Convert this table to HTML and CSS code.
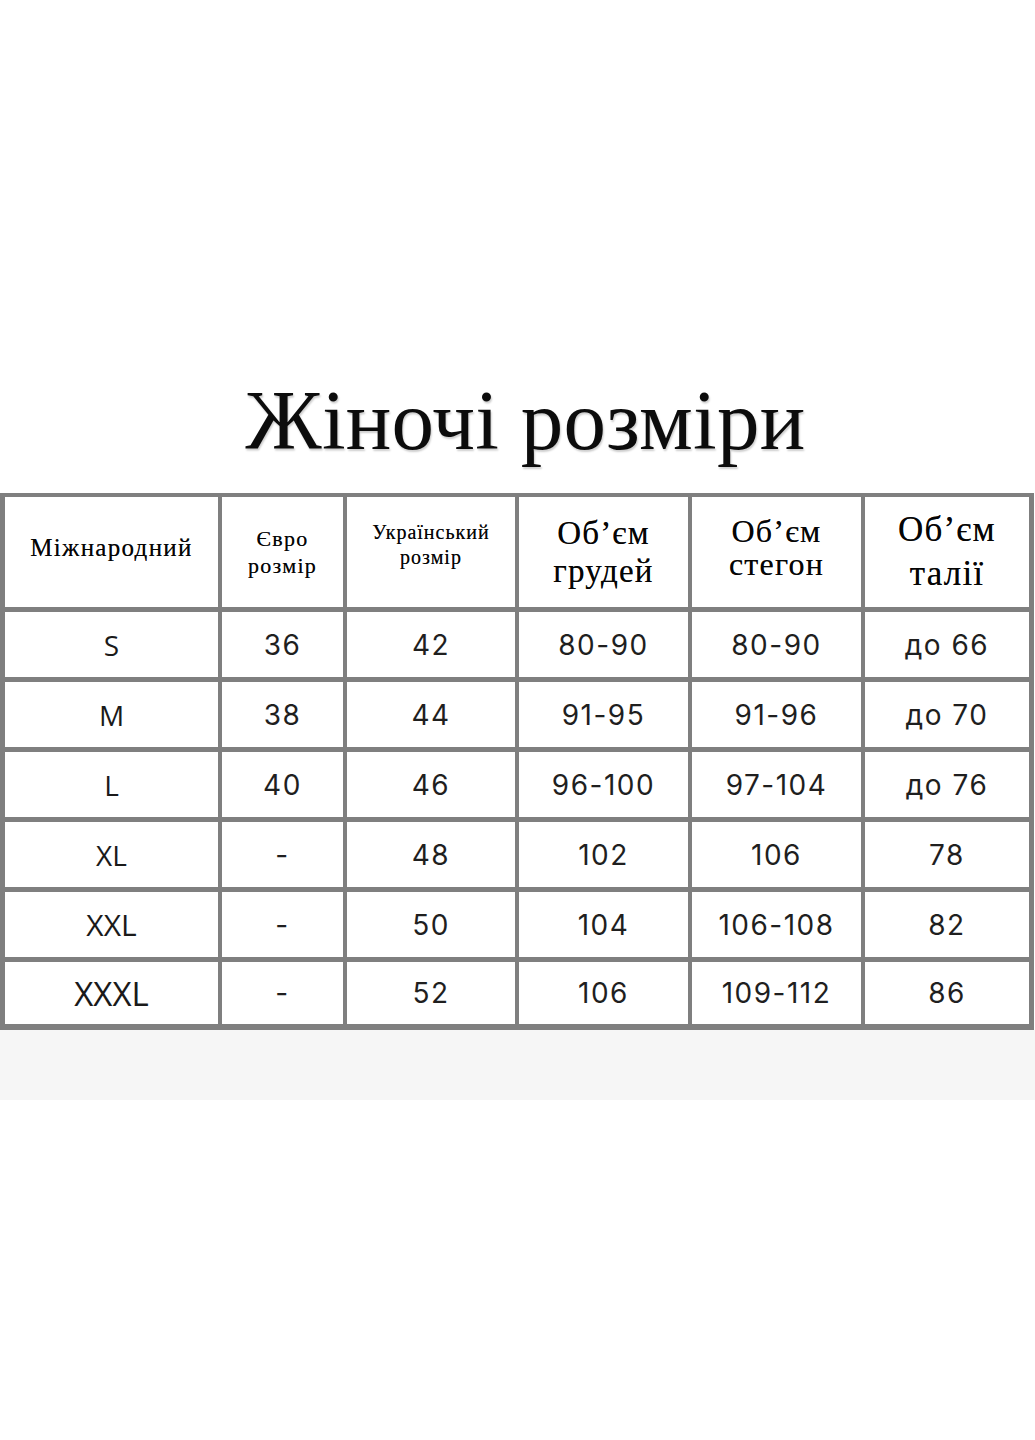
FILE: index.html
```html
<!DOCTYPE html>
<html lang="uk">
<head>
<meta charset="utf-8">
<title>Жіночі розміри</title>
<link rel="stylesheet" href="styles.css">
</head>
<body>
<main class="page">
  <h1 class="title">Жіночі розміри</h1>
  <div class="chart">
    <div class="cell head h-intl">Міжнародний</div>
    <div class="cell head h-euro"><span>Євро</span><span>розмір</span></div>
    <div class="cell head h-ua"><span>Український</span><span>розмір</span></div>
    <div class="cell head h-chest"><span>Об’єм</span><span>грудей</span></div>
    <div class="cell head h-hips"><span>Об’єм</span><span>стегон</span></div>
    <div class="cell head h-waist"><span>Об’єм</span><span>талії</span></div>

    <div class="cell size">S</div><div class="cell num">36</div><div class="cell num">42</div><div class="cell num">80-90</div><div class="cell num">80-90</div><div class="cell num">до 66</div>
    <div class="cell size">M</div><div class="cell num">38</div><div class="cell num">44</div><div class="cell num">91-95</div><div class="cell num">91-96</div><div class="cell num">до 70</div>
    <div class="cell size">L</div><div class="cell num">40</div><div class="cell num">46</div><div class="cell num">96-100</div><div class="cell num">97-104</div><div class="cell num">до 76</div>
    <div class="cell size">XL</div><div class="cell num">-</div><div class="cell num">48</div><div class="cell num">102</div><div class="cell num">106</div><div class="cell num">78</div>
    <div class="cell size size-lg">XXL</div><div class="cell num">-</div><div class="cell num">50</div><div class="cell num">104</div><div class="cell num">106-108</div><div class="cell num">82</div>
    <div class="cell size size-xl">XXXL</div><div class="cell num">-</div><div class="cell num">52</div><div class="cell num">106</div><div class="cell num">109-112</div><div class="cell num">86</div>
  </div>
  <div class="band"></div>
</main>
</body>
</html>
```

FILE: styles.css
```css
html, body {
  margin: 0;
  padding: 0;
  background: #ffffff;
}

.page {
  width: 1035px;
  min-height: 1440px;
}

.title {
  margin: 0 0 23px 0;
  padding: 370px 0 0 16px;
  height: 100px;
  line-height: 100px;
  text-align: center;
  font-family: "Liberation Serif", "Times New Roman", serif;
  font-weight: 400;
  font-size: 85px;
  letter-spacing: 0.3px;
  color: #0c0c0c;
  text-shadow: 1px 2px 2px rgba(0, 0, 0, 0.2);
}

.chart {
  width: 1034px;
  box-sizing: border-box;
  display: grid;
  grid-template-columns: 213px 121px 168px 169px 169px 164px;
  grid-template-rows: 110px 65px 65px 65px 65px 65px 62px;
  column-gap: 4px;
  row-gap: 5px;
  padding: 4px 5px 6px 5px;
  background: #7f7f7f;
}

.cell {
  background: #ffffff;
  display: flex;
  flex-direction: column;
  align-items: center;
  justify-content: center;
  text-align: center;
  color: #1c1c1c;
}

.head {
  font-family: "Liberation Serif", "Times New Roman", serif;
  color: #050505;
  text-shadow: 0 0 0.6px rgba(0, 0, 0, 0.6);
}

.head span {
  display: block;
}

.h-intl {
  font-size: 25px;
  letter-spacing: 1.3px;
  padding-bottom: 8px;
}

.h-euro {
  font-size: 22px;
  line-height: 27px;
  letter-spacing: 1.3px;
}

.h-ua {
  font-size: 20px;
  line-height: 25px;
  letter-spacing: 1px;
  padding-bottom: 14px;
}

.h-chest {
  font-size: 33px;
  line-height: 38px;
  letter-spacing: 1.2px;
}

.h-hips {
  font-size: 32px;
  line-height: 33px;
  letter-spacing: 1.2px;
  padding-bottom: 8px;
}

.h-waist {
  font-size: 35px;
  line-height: 44px;
  letter-spacing: 1.2px;
}

.num {
  font-family: "Inter", "DejaVu Sans", sans-serif;
  font-size: 28px;
  letter-spacing: 1.5px;
  color: #1f1f1f;
}

.size {
  font-family: "Open Sans", "Liberation Sans", sans-serif;
  font-size: 28px;
  color: #1a1a1a;
}

.size-lg {
  font-size: 30px;
}

.size-xl {
  font-size: 33px;
}

.band {
  height: 70px;
  background: #f6f6f6;
}
```
